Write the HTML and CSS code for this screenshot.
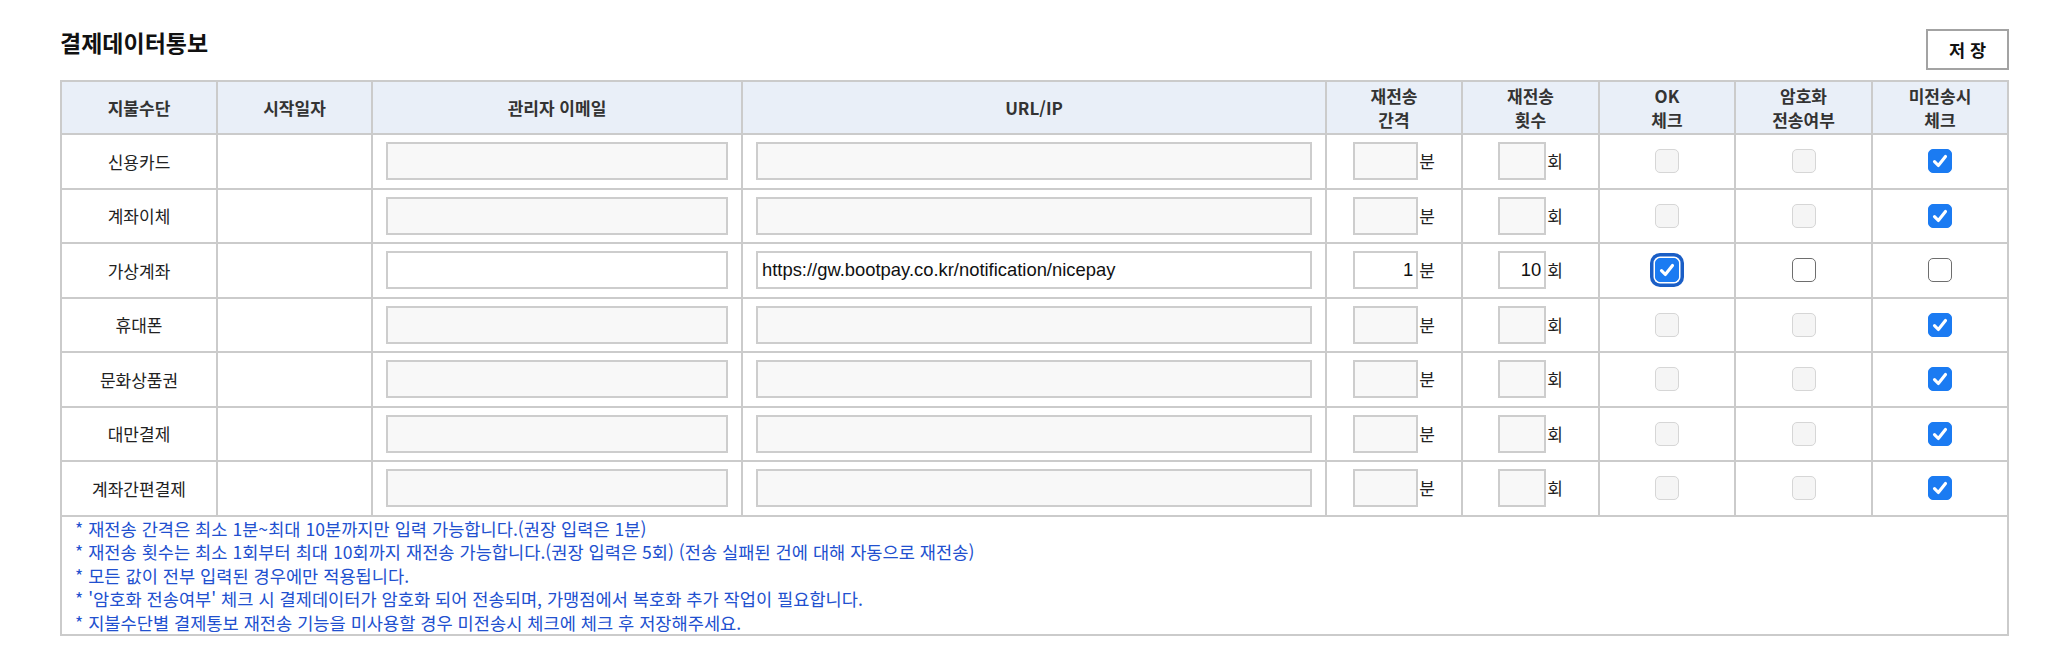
FILE: index.html
```html
<!DOCTYPE html>
<html lang="ko">
<head>
<meta charset="utf-8">
<title>결제데이터통보</title>
<link rel="stylesheet" href="styles.css">
</head>
<body>
<div class="page">
  <div class="top">
    <h2 class="title">결제데이터통보</h2>
    <button class="save" type="button">저 장</button>
  </div>
  <table class="grid">
    <colgroup>
      <col class="c-name"><col class="c-date"><col class="c-mail"><col class="c-url">
      <col class="c-int"><col class="c-cnt"><col class="c-ok"><col class="c-enc"><col class="c-miss">
    </colgroup>
    <thead>
      <tr>
        <th>지불수단</th>
        <th>시작일자</th>
        <th>관리자 이메일</th>
        <th>URL/IP</th>
        <th>재전송<br>간격</th>
        <th>재전송<br>횟수</th>
        <th>OK<br>체크</th>
        <th>암호화<br>전송여부</th>
        <th>미전송시<br>체크</th>
      </tr>
    </thead>
    <tbody>
      <tr>
        <td>신용카드</td><td></td>
        <td><input class="field" type="text" disabled></td>
        <td><input class="field" type="text" disabled></td>
        <td><div class="pair"><input class="field num" type="text" disabled><span class="unit">분</span></div></td>
        <td><div class="pair"><input class="field cnt" type="text" disabled><span class="unit">회</span></div></td>
        <td><input class="cb" type="checkbox" disabled></td>
        <td><input class="cb" type="checkbox" disabled></td>
        <td><input class="cb" type="checkbox" checked></td>
      </tr>
      <tr>
        <td>계좌이체</td><td></td>
        <td><input class="field" type="text" disabled></td>
        <td><input class="field" type="text" disabled></td>
        <td><div class="pair"><input class="field num" type="text" disabled><span class="unit">분</span></div></td>
        <td><div class="pair"><input class="field cnt" type="text" disabled><span class="unit">회</span></div></td>
        <td><input class="cb" type="checkbox" disabled></td>
        <td><input class="cb" type="checkbox" disabled></td>
        <td><input class="cb" type="checkbox" checked></td>
      </tr>
      <tr>
        <td>가상계좌</td><td></td>
        <td><input class="field on" type="text"></td>
        <td><input class="field on" type="text" value="https://gw.bootpay.co.kr/notification/nicepay"></td>
        <td><div class="pair"><input class="field on num" type="text" value="1"><span class="unit">분</span></div></td>
        <td><div class="pair"><input class="field on cnt" type="text" value="10"><span class="unit">회</span></div></td>
        <td><input class="cb open focus" type="checkbox" checked></td>
        <td><input class="cb open" type="checkbox"></td>
        <td><input class="cb open" type="checkbox"></td>
      </tr>
      <tr>
        <td>휴대폰</td><td></td>
        <td><input class="field" type="text" disabled></td>
        <td><input class="field" type="text" disabled></td>
        <td><div class="pair"><input class="field num" type="text" disabled><span class="unit">분</span></div></td>
        <td><div class="pair"><input class="field cnt" type="text" disabled><span class="unit">회</span></div></td>
        <td><input class="cb" type="checkbox" disabled></td>
        <td><input class="cb" type="checkbox" disabled></td>
        <td><input class="cb" type="checkbox" checked></td>
      </tr>
      <tr>
        <td>문화상품권</td><td></td>
        <td><input class="field" type="text" disabled></td>
        <td><input class="field" type="text" disabled></td>
        <td><div class="pair"><input class="field num" type="text" disabled><span class="unit">분</span></div></td>
        <td><div class="pair"><input class="field cnt" type="text" disabled><span class="unit">회</span></div></td>
        <td><input class="cb" type="checkbox" disabled></td>
        <td><input class="cb" type="checkbox" disabled></td>
        <td><input class="cb" type="checkbox" checked></td>
      </tr>
      <tr>
        <td>대만결제</td><td></td>
        <td><input class="field" type="text" disabled></td>
        <td><input class="field" type="text" disabled></td>
        <td><div class="pair"><input class="field num" type="text" disabled><span class="unit">분</span></div></td>
        <td><div class="pair"><input class="field cnt" type="text" disabled><span class="unit">회</span></div></td>
        <td><input class="cb" type="checkbox" disabled></td>
        <td><input class="cb" type="checkbox" disabled></td>
        <td><input class="cb" type="checkbox" checked></td>
      </tr>
      <tr>
        <td>계좌간편결제</td><td></td>
        <td><input class="field" type="text" disabled></td>
        <td><input class="field" type="text" disabled></td>
        <td><div class="pair"><input class="field num" type="text" disabled><span class="unit">분</span></div></td>
        <td><div class="pair"><input class="field cnt" type="text" disabled><span class="unit">회</span></div></td>
        <td><input class="cb" type="checkbox" disabled></td>
        <td><input class="cb" type="checkbox" disabled></td>
        <td><input class="cb" type="checkbox" checked></td>
      </tr>
      <tr>
        <td class="notes" colspan="9">
          <div class="note">* 재전송 간격은 최소 1분~최대 10분까지만 입력 가능합니다.(권장 입력은 1분)</div>
          <div class="note">* 재전송 횟수는 최소 1회부터 최대 10회까지 재전송 가능합니다.(권장 입력은 5회) (전송 실패된 건에 대해 자동으로 재전송)</div>
          <div class="note">* 모든 값이 전부 입력된 경우에만 적용됩니다.</div>
          <div class="note">* '암호화 전송여부' 체크 시 결제데이터가 암호화 되어 전송되며, 가맹점에서 복호화 추가 작업이 필요합니다.</div>
          <div class="note">* 지불수단별 결제통보 재전송 기능을 미사용할 경우 미전송시 체크에 체크 후 저장해주세요.</div>
        </td>
      </tr>
    </tbody>
  </table>
</div>
</body>
</html>
```
FILE: styles.css
```css
* { box-sizing: border-box; }

body {
  margin: 0;
  background: #fff;
  color: #222;
  font-family: "Noto Sans CJK KR", "Liberation Sans", sans-serif;
}

.page {
  padding: 28px 39px 0 60px;
}

.top {
  display: flex;
  justify-content: space-between;
  align-items: flex-start;
  height: 52px;
}

.title {
  margin: 0;
  font-size: 23px;
  font-weight: 700;
  line-height: 28px;
  color: #111;
}

.save {
  margin-top: 1px;
  width: 83px;
  height: 41px;
  border: 2px solid #a3a3a3;
  background: #fff;
  color: #111;
  font-family: "Noto Sans CJK KR", sans-serif;
  font-size: 17.5px;
  font-weight: 700;
  padding: 0;
}

.grid {
  width: 1949px;
  table-layout: fixed;
  border-collapse: separate;
  border-spacing: 0;
  border-top: 2px solid #cbcbcb;
  border-left: 2px solid #cbcbcb;
}

.c-name { width: 156px; }
.c-date { width: 155px; }
.c-mail { width: 370px; }
.c-url { width: 584px; }
.c-int { width: 136px; }
.c-cnt { width: 137px; }
.c-ok { width: 136px; }
.c-enc { width: 137px; }
.c-miss { width: 136px; }

.grid th,
.grid td {
  border-right: 2px solid #cbcbcb;
  border-bottom: 2px solid #cbcbcb;
  padding: 0 13px;
  text-align: center;
  vertical-align: middle;
}

.grid th {
  height: 53px;
  background: #e9eff8;
  color: #333;
  font-size: 17px;
  font-weight: 700;
  line-height: 24px;
}

.grid td {
  height: 54.5px;
  font-size: 17px;
  color: #222;
}

.field {
  display: block;
  width: 100%;
  height: 38px;
  margin: 0;
  padding: 0 4px;
  border: 2px solid #cdcdcd;
  border-radius: 0;
  background: #f8f8f8;
  color: #111;
  font-family: "Liberation Sans", sans-serif;
  font-size: 18.4px;
  outline: none;
}

.field.on { background: #fff; }

.pair {
  display: flex;
  justify-content: center;
  align-items: center;
  gap: 1px;
}

.field.num { width: 65px; text-align: right; padding-right: 3px; }
.field.cnt { width: 48px; text-align: right; padding-right: 3px; }

.unit {
  font-size: 17px;
  line-height: 20px;
  color: #222;
}

.cb {
  -webkit-appearance: none;
  appearance: none;
  display: block;
  width: 24px;
  height: 24px;
  margin: 0 auto;
  border: 1.5px solid #d6d6d6;
  border-radius: 5px;
  background: #f5f5f5;
}

.cb.open {
  border-color: #6e6e6e;
  background: #fff;
}

.cb:checked {
  border-color: #1b7bf2;
  background: #1b7bf2 url("data:image/svg+xml,%3Csvg xmlns='http://www.w3.org/2000/svg' viewBox='0 0 24 24'%3E%3Cpath d='M6 12.6l4.2 4.3L18 7' fill='none' stroke='%23fff' stroke-width='3.4' stroke-linecap='round' stroke-linejoin='round'/%3E%3C/svg%3E") center / 22px 22px no-repeat;
}

.cb.focus {
  box-shadow: 0 0 0 1.5px #fff, 0 0 0 5px #1a5ec6;
}

.grid td.notes {
  height: 119.5px;
  padding: 0 13px;
  text-align: left;
  vertical-align: top;
}

.note {
  color: #2150cf;
  font-size: 17.6px;
  line-height: 23.5px;
  white-space: nowrap;
}
```
